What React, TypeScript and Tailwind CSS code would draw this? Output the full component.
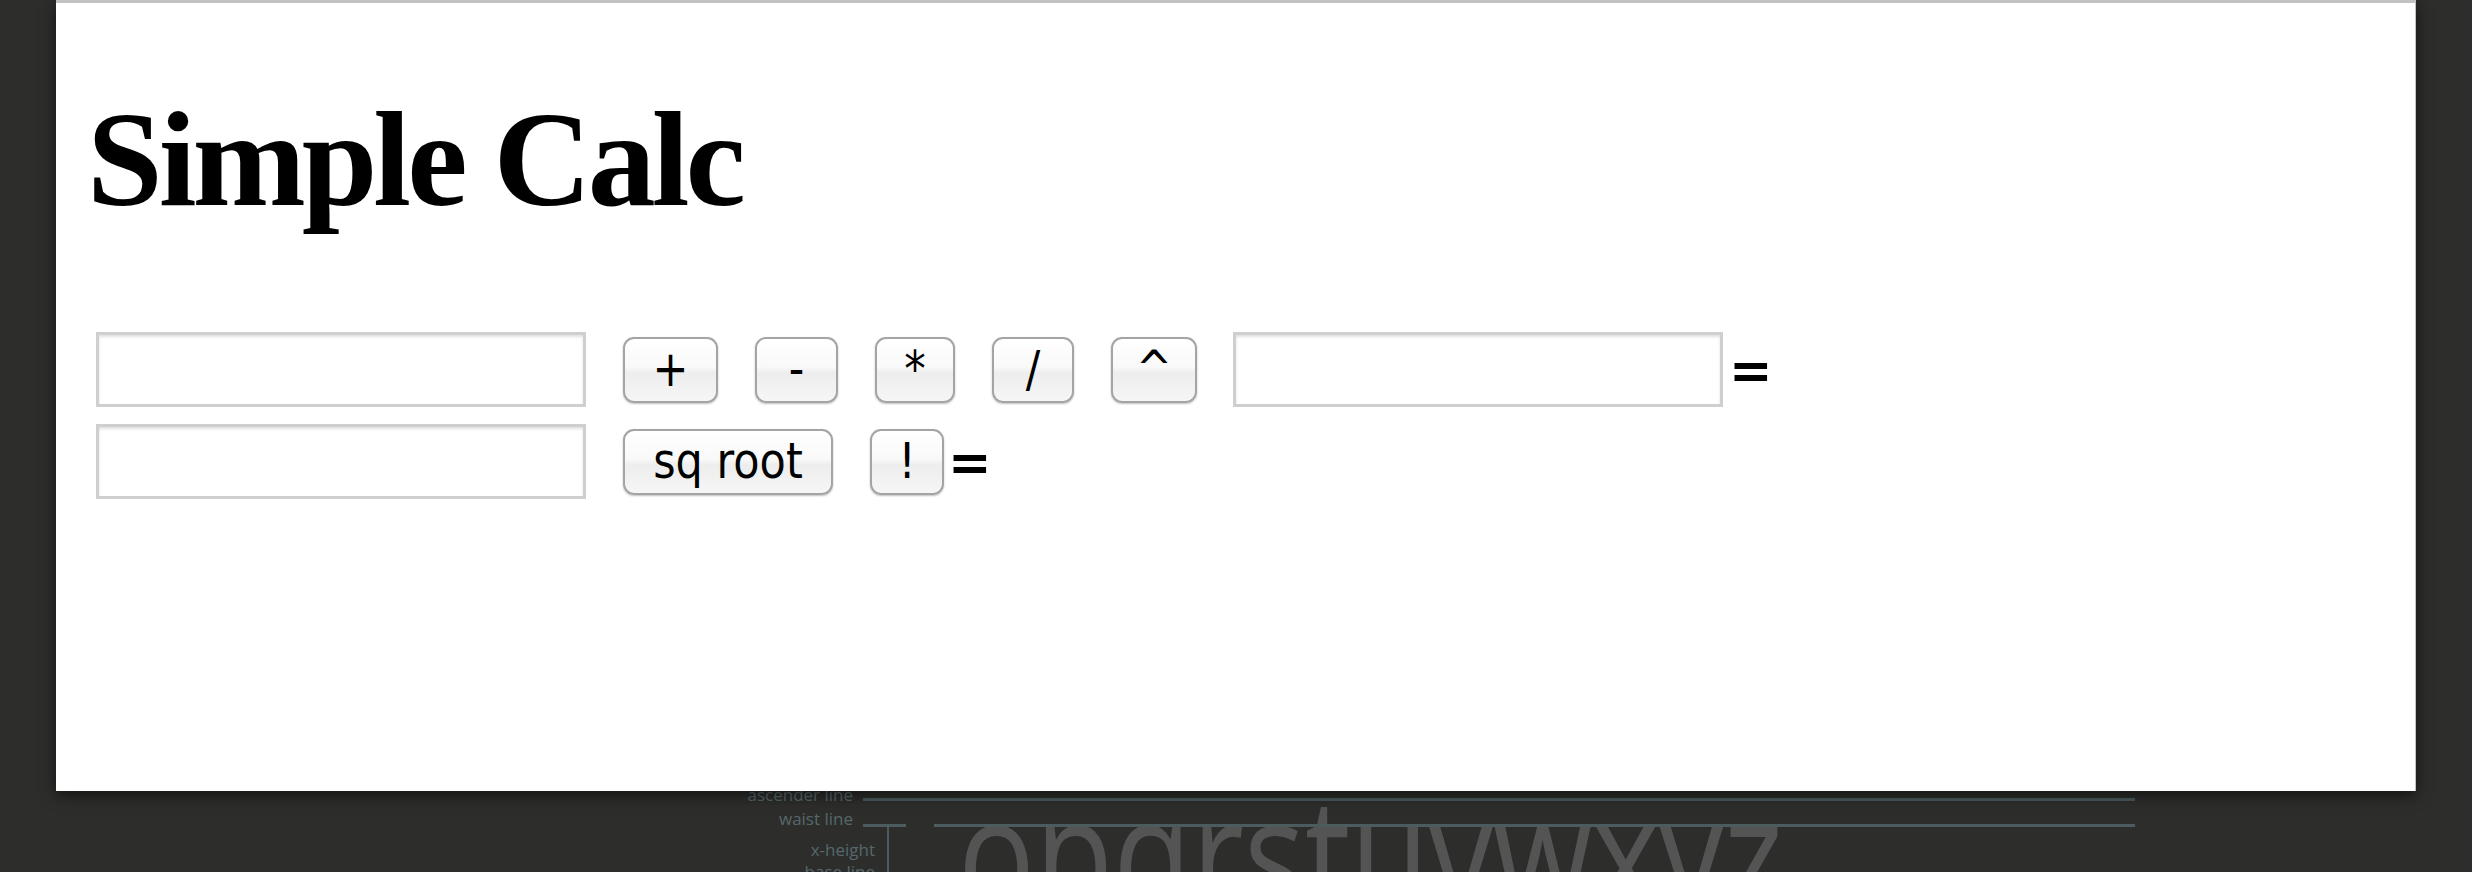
import React from 'react';

const ops = [
  { label: '+', w: 'w-[95px]' },
  { label: '-', w: 'w-[83px]' },
  { label: '*', w: 'w-[80px]' },
  { label: '/', w: 'w-[82px]' },
  { label: '^', w: 'w-[86px]' },
];

function CalcButton({ label, className }: { label: string; className: string }) {
  return (
    <button
      type="button"
      className={`h-[66px] ${className} flex items-center justify-center rounded-[11px] border-2 border-[#a4a4a4] bg-[linear-gradient(to_bottom,#ffffff_0%,#f9f9f9_45%,#ededed_55%,#f6f6f6_100%)] shadow-[0_1px_2px_rgba(0,0,0,0.25)] font-['DejaVu_Sans',sans-serif] text-[43px] leading-none text-black`}
    >
      <span className="inline-block scale-y-[1.15]">{label}</span>
    </button>
  );
}

function Field() {
  return (
    <input
      type="text"
      className="h-[75px] w-[490px] border-[3px] border-[#cfcfcf] bg-white shadow-[inset_0_2px_3px_rgba(0,0,0,0.12)] outline-none"
    />
  );
}

function Equals({ className }: { className: string }) {
  return (
    <span className={`${className} font-['DejaVu_Sans',sans-serif] text-[52px] font-bold leading-none text-black`}>=</span>
  );
}

// the type-anatomy artwork that shows under the window
function TypeDiagram() {
  const label = "text-right font-['Open_Sans',sans-serif] text-[17px] leading-[20px] text-[#56686b] whitespace-nowrap";
  const rule = 'h-[3px] bg-[#4b5b5e]';
  return (
    <div className="relative -mt-[8px] ml-[700px] flex flex-col">
      <span className="absolute left-[258px] top-[-13px] origin-left scale-x-[0.8] font-['Open_Sans',sans-serif] text-[160px] leading-none text-[#545454] whitespace-nowrap">
        opqrstuvwxyz
      </span>
      <div className="relative flex h-[24px] items-end">
        <span className={`${label} w-[153px] self-center`}>ascender line</span>
        <div className={`${rule} mb-[6px] ml-[10px] w-[1272px]`} />
      </div>
      <div className="relative flex h-[24px] items-end">
        <span className={`${label} w-[153px] self-center`}>waist line</span>
        <div className={`${rule} mb-[4px] ml-[10px] w-[43px]`} />
        <div className={`${rule} mb-[4px] ml-[28px] w-[1201px]`} />
      </div>
      <div className="relative flex">
        <div className="flex w-[175px] flex-col gap-[2px] pt-[9px]">
          <span className={label}>x-height</span>
          <span className={label}>base line</span>
        </div>
        <div className="-mt-[7px] ml-[12px] w-[2px] self-stretch bg-[#4b5b5e]" />
      </div>
    </div>
  );
}

export default function App() {
  return (
    <div className="h-[872px] w-[2472px] overflow-hidden bg-[#2d2d2b]">
      <div className="relative z-10 mx-[56px] h-[791px] border-t-[3px] border-r border-[#c2c2c2] bg-white px-[40px] shadow-[0_4px_14px_rgba(0,0,0,0.6)]">
        <h1 className="-ml-[9px] pt-[88px] font-['Liberation_Serif',serif] text-[136px] font-bold leading-none tracking-[-4px] text-black">
          Simple Calc
        </h1>

        <div className="mt-[105px] flex h-[75px] items-center">
          <Field />
          <div className="ml-[37px] flex gap-[37px]">
            {ops.map((op) => (
              <CalcButton key={op.label} label={op.label} className={op.w} />
            ))}
          </div>
          <div className="ml-[36px]">
            <Field />
          </div>
          <Equals className="ml-[6px]" />
        </div>

        <div className="mt-[17px] flex h-[75px] items-center">
          <Field />
          <CalcButton label="sq root" className="ml-[37px] w-[210px]" />
          <CalcButton label="!" className="ml-[37px] w-[74px]" />
          <Equals className="ml-[4px]" />
        </div>
      </div>
      <TypeDiagram />
    </div>
  );
}
